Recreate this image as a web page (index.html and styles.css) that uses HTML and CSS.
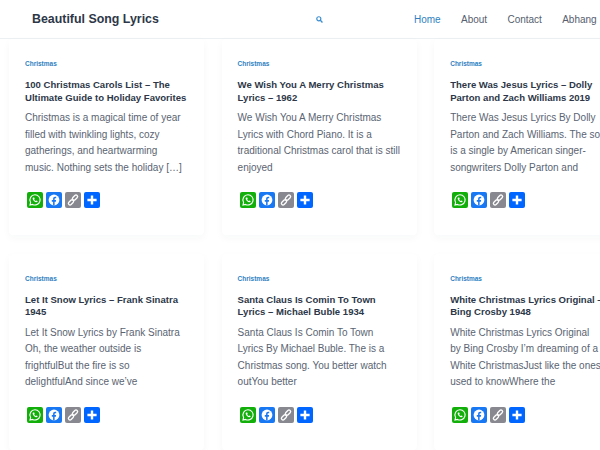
FILE: index.html
```html
<!DOCTYPE html>
<html lang="en">
<head>
<meta charset="utf-8">
<title>Beautiful Song Lyrics</title>
<link rel="stylesheet" href="styles.css">
</head>
<body>
<svg class="defs" width="0" height="0" aria-hidden="true">
  <symbol id="i-wa" viewBox="0 0 16 16">
    <rect width="16" height="16" rx="2" fill="#12AF0A"/>
    <path d="M8 2.8a5.1 5.1 0 0 0-4.4 7.7L3 13l2.6-.6A5.1 5.1 0 1 0 8 2.8z" fill="none" stroke="#fff" stroke-width="1.1"/>
    <path d="M6.2 5.4c-.5.4-.7 1-.4 1.8.5 1.4 1.7 2.6 3 3 .8.2 1.4 0 1.8-.6l-.1-.6-1.1-.5-.6.5c-.7-.3-1.3-.9-1.6-1.6l.5-.6-.5-1.2z" fill="#fff"/>
  </symbol>
  <symbol id="i-fb" viewBox="0 0 16 16">
    <rect width="16" height="16" rx="2" fill="#1877F2"/>
    <circle cx="8" cy="8" r="5.4" fill="#fff"/>
    <path d="M7.1 13.6V9.7H5.8V8h1.3V6.8c0-1.4.8-2.1 2-2.1l1.1.1v1.5h-.7c-.7 0-.9.4-.9.9V8h1.5l-.2 1.7H8.6v3.9z" fill="#1877F2"/>
  </symbol>
  <symbol id="i-link" viewBox="0 0 16 16">
    <rect width="16" height="16" rx="2" fill="#888990"/>
    <g fill="none" stroke="#fff" stroke-width="1.3" stroke-linecap="round">
      <rect x="8.4" y="2.6" width="3.2" height="6" rx="1.6" transform="rotate(45 10 5.6)"/>
      <rect x="4.4" y="7.4" width="3.2" height="6" rx="1.6" transform="rotate(45 6 10.4)"/>
    </g>
  </symbol>
  <symbol id="i-add" viewBox="0 0 16 16">
    <rect width="16" height="16" rx="2" fill="#0166FF"/>
    <path d="M8 3.4v9.2M3.4 8h9.2" stroke="#fff" stroke-width="2.4"/>
  </symbol>
</svg>
<header class="site-header">
  <a class="brand" href="#">Beautiful Song Lyrics</a>
  <a class="search" href="#" aria-label="Search">
    <svg width="7" height="7" viewBox="0 0 10 10"><circle cx="4" cy="4" r="2.9" fill="none" stroke="#3f8fd0" stroke-width="1.7"/><path d="M6.2 6.2 9.2 9.2" stroke="#3f8fd0" stroke-width="1.9"/></svg>
  </a>
  <nav class="nav">
    <a class="nav-link current" href="#">Home</a>
    <a class="nav-link" href="#">About</a>
    <a class="nav-link" href="#">Contact</a>
    <a class="nav-link" href="#">Abhang</a>
  </nav>
</header>
<main class="grid">
  <article class="card">
    <a class="cat" href="#">Christmas</a>
    <h2 class="title">100 Christmas Carols List – The<br>Ultimate Guide to Holiday Favorites</h2>
    <p class="excerpt">Christmas is a magical time of year<br>filled with twinkling lights, cozy<br>gatherings, and heartwarming<br>music. Nothing sets the holiday […]</p>
    <div class="share"><svg class="ico"><use href="#i-wa"/></svg><svg class="ico"><use href="#i-fb"/></svg><svg class="ico"><use href="#i-link"/></svg><svg class="ico"><use href="#i-add"/></svg></div>
  </article>
  <article class="card">
    <a class="cat" href="#">Christmas</a>
    <h2 class="title">We Wish You A Merry Christmas<br>Lyrics – 1962</h2>
    <p class="excerpt">We Wish You A Merry Christmas<br>Lyrics with Chord Piano. It is a<br>traditional Christmas carol that is still<br>enjoyed</p>
    <div class="share"><svg class="ico"><use href="#i-wa"/></svg><svg class="ico"><use href="#i-fb"/></svg><svg class="ico"><use href="#i-link"/></svg><svg class="ico"><use href="#i-add"/></svg></div>
  </article>
  <article class="card">
    <a class="cat" href="#">Christmas</a>
    <h2 class="title">There Was Jesus Lyrics – Dolly<br>Parton and Zach Williams 2019</h2>
    <p class="excerpt">There Was Jesus Lyrics By Dolly<br>Parton and Zach Williams. The song<br>is a single by American singer-<br>songwriters Dolly Parton and</p>
    <div class="share"><svg class="ico"><use href="#i-wa"/></svg><svg class="ico"><use href="#i-fb"/></svg><svg class="ico"><use href="#i-link"/></svg><svg class="ico"><use href="#i-add"/></svg></div>
  </article>
  <article class="card">
    <a class="cat" href="#">Christmas</a>
    <h2 class="title">Let It Snow Lyrics – Frank Sinatra<br>1945</h2>
    <p class="excerpt">Let It Snow Lyrics by Frank Sinatra<br>Oh, the weather outside is<br>frightfulBut the fire is so<br>delightfulAnd since we’ve</p>
    <div class="share"><svg class="ico"><use href="#i-wa"/></svg><svg class="ico"><use href="#i-fb"/></svg><svg class="ico"><use href="#i-link"/></svg><svg class="ico"><use href="#i-add"/></svg></div>
  </article>
  <article class="card">
    <a class="cat" href="#">Christmas</a>
    <h2 class="title">Santa Claus Is Comin To Town<br>Lyrics – Michael Buble 1934</h2>
    <p class="excerpt">Santa Claus Is Comin To Town<br>Lyrics By Michael Buble. The is a<br>Christmas song. You better watch<br>outYou better</p>
    <div class="share"><svg class="ico"><use href="#i-wa"/></svg><svg class="ico"><use href="#i-fb"/></svg><svg class="ico"><use href="#i-link"/></svg><svg class="ico"><use href="#i-add"/></svg></div>
  </article>
  <article class="card">
    <a class="cat" href="#">Christmas</a>
    <h2 class="title">White Christmas Lyrics Original –<br>Bing Crosby 1948</h2>
    <p class="excerpt">White Christmas Lyrics Original<br>by Bing Crosby I’m dreaming of a<br>White ChristmasJust like the ones<br>used to knowWhere the</p>
    <div class="share"><svg class="ico"><use href="#i-wa"/></svg><svg class="ico"><use href="#i-fb"/></svg><svg class="ico"><use href="#i-link"/></svg><svg class="ico"><use href="#i-add"/></svg></div>
  </article>
</main>
</body>
</html>
```
FILE: styles.css
```css
* { box-sizing: border-box; }
html, body { margin: 0; height: 450px; overflow: hidden; }
body { background: #fff; font-family: "Liberation Sans", Arial, sans-serif; color: #2d3748; }
a { text-decoration: none; color: inherit; }
.defs { display: block; height: 0; }
.site-header { height: 39px; display: flex; align-items: center; padding: 0 0 0 32px; border-bottom: 1px solid #edf0f3; white-space: nowrap; }
.brand { font-size: 12.4px; font-weight: 700; color: #2d3748; width: 284px; }
.search { display: flex; width: 98px; }
.nav { display: flex; gap: 20.3px; }
.nav-link { font-size: 10px; color: #56606f; }
.nav-link.current { color: #2f7fc1; }
.grid { display: grid; grid-template-columns: repeat(3, 195px); gap: 18.5px 17.6px; padding: 0 0 0 9px; width: 640px; }
.card { height: 196px; padding: 21px 16px 0; border-radius: 4px; box-shadow: 0 3px 8px rgba(30, 50, 80, 0.035); background: #fff; display: flex; flex-direction: column; white-space: nowrap; }
.cat { font-size: 6.5px; font-weight: 700; color: #2f7fc1; line-height: 8px; }
.title { margin: 11px 0 0; font-size: 9.55px; font-weight: 700; line-height: 12.6px; color: #2d3748; }
.excerpt { margin: 6px 0 0; height: 67px; font-size: 10px; line-height: 16.6px; color: #5a6472; }
.share { display: flex; gap: 3px; margin: 15px 0 0 2px; }
.ico { width: 16px; height: 16px; display: block; }
```
